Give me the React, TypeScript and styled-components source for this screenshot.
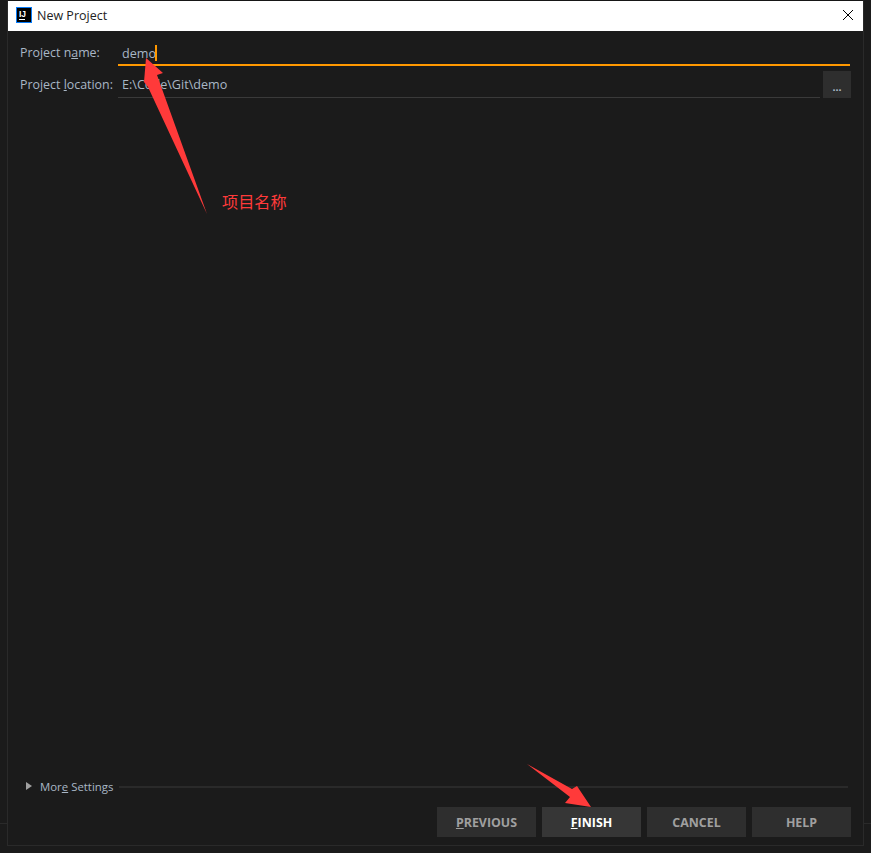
import React from "react";
import styled, { createGlobalStyle } from "styled-components";

const GlobalStyle = createGlobalStyle`
  html, body {
    margin: 0;
    padding: 0;
    background: #1b1b1b;
  }
  * {
    box-sizing: border-box;
  }
`;

const Page = styled.div`
  position: relative;
  width: 871px;
  height: 853px;
  padding: 0 7px 7px 7px;
  overflow: hidden;
  font-family: "Open Sans", "Liberation Sans", sans-serif;
  background: linear-gradient(#2a2a2a, #2a2a2a) 0 823px / 100% 1px no-repeat, #1b1b1b;
`;

const Window = styled.div`
  display: flex;
  flex-direction: column;
  height: 100%;
  background: #1b1b1b;
  border: 1px solid #2a2a2a;
  border-top-color: #161616;
`;

const TitleBar = styled.div`
  display: flex;
  align-items: center;
  flex: none;
  height: 30px;
  padding: 0 9px 2px 8px;
  background: #fff;
`;

const Logo = styled.span`
  display: flex;
  flex-direction: column;
  flex: none;
  width: 16px;
  height: 16px;
  padding: 2px 2px;
  background: #000;
  border: 1px solid #087cfa;
  color: #fff;
  font: bold 8.5px/8px "Liberation Sans", sans-serif;
  &::after {
    content: "";
    width: 6px;
    height: 1px;
    margin-top: 1px;
    background: #fff;
  }
`;

const Title = styled.span`
  flex: 1;
  margin-left: 5px;
  font-size: 12.5px;
  color: #222;
`;

const CloseIcon = styled.svg`
  display: block;
  width: 12px;
  height: 12px;
`;

const Body = styled.div`
  display: flex;
  flex-direction: column;
  flex: 1;
  padding: 8px 12px 8px;
`;

const Row = styled.div`
  display: grid;
  grid-template-columns: 98px 1fr auto;
  align-items: stretch;
  height: 27px;
  margin-bottom: 5px;
`;

const Label = styled.label`
  align-self: center;
  font-size: 12.4px;
  color: #a9b7c6;
  white-space: nowrap;
`;

const Field = styled.div<{ $focused?: boolean }>`
  display: flex;
  align-items: center;
  padding-left: 4px;
  padding-top: ${(p) => (p.$focused ? "3px" : "0")};
  margin-right: ${(p) => (p.$focused ? "1px" : "3px")};
  font-size: 12.6px;
  color: #a9b7c6;
  border-bottom: ${(p) => (p.$focused ? "2px solid #ff9800" : "1px solid #3a3a3a")};
`;

const Caret = styled.span`
  display: inline-block;
  width: 2px;
  height: 16px;
  margin-top: -1px;
  margin-left: -1px;
  background: #ff9800;
`;

const BrowseButton = styled.button`
  width: 28px;
  padding: 4px 0 0;
  background: #2e2e2e;
  border: 0;
  color: #a9b7c6;
  font: bold 11px "Liberation Sans", sans-serif;
`;

const Footer = styled.div`
  margin-top: auto;
`;

const MoreRow = styled.div`
  display: flex;
  align-items: center;
  height: 16px;
  margin: 0 3px 12px 6px;
`;

const Triangle = styled.span`
  width: 0;
  height: 0;
  border-left: 6px solid #a0a0a0;
  border-top: 4px solid transparent;
  border-bottom: 4px solid transparent;
  margin-top: -2px;
`;

const MoreLabel = styled.span`
  margin-left: 8px;
  margin-top: -2px;
  font-size: 11.4px;
  color: #a9b7c6;
  white-space: nowrap;
`;

const MoreLine = styled.span`
  flex: 1;
  height: 2px;
  margin-left: 6px;
  background: #2a2a2a;
`;

const ButtonRow = styled.div`
  display: flex;
  justify-content: flex-end;
  gap: 6px;
`;

const ActionButton = styled.button<{ $primary?: boolean }>`
  width: 99px;
  height: 30px;
  padding: 0;
  border: 0;
  font-family: "Open Sans", "Liberation Sans", sans-serif;
  font-size: 12.4px;
  font-weight: 700;
  background: ${(p) => (p.$primary ? "#363636" : "#2e2e2e")};
  color: ${(p) => (p.$primary ? "#fff" : "#a0a0a0")};
`;

const Overlay = styled.svg`
  position: absolute;
  top: 0;
  left: 0;
  width: 871px;
  height: 853px;
  pointer-events: none;
`;

const Note = styled.span`
  position: absolute;
  left: 222px;
  top: 190px;
  font: 16.2px/22px "Noto Sans CJK SC", sans-serif;
  color: #ff3a3a;
`;

export default function App(): JSX.Element {
  return (
    <>
      <GlobalStyle />
      <Page>
        <Window>
          <TitleBar>
            <Logo>IJ</Logo>
            <Title>New Project</Title>
            <CloseIcon viewBox="0 0 12 12">
              <path d="M1 1 L11 11 M11 1 L1 11" stroke="#000" strokeWidth="1" fill="none" />
            </CloseIcon>
          </TitleBar>
          <Body>
            <Row>
              <Label>
                Project n<u>a</u>me:
              </Label>
              <Field $focused>
                demo
                <Caret />
              </Field>
            </Row>
            <Row>
              <Label>
                Project <u>l</u>ocation:
              </Label>
              <Field>E:\Code\Git\demo</Field>
              <BrowseButton>...</BrowseButton>
            </Row>
            <Footer>
              <MoreRow>
                <Triangle />
                <MoreLabel>
                  Mor<u>e</u> Settings
                </MoreLabel>
                <MoreLine />
              </MoreRow>
              <ButtonRow>
                <ActionButton>
                  <u>P</u>REVIOUS
                </ActionButton>
                <ActionButton $primary>
                  <u>F</u>INISH
                </ActionButton>
                <ActionButton>CANCEL</ActionButton>
                <ActionButton>HELP</ActionButton>
              </ButtonRow>
            </Footer>
          </Body>
        </Window>
        <Overlay viewBox="0 0 871 853">
          <polygon points="146,58 163,73 157,75 207,214 148,87 144,82" fill="#ff3a3a" />
          <polygon points="527,764 572,789 577,786 591,807 565,803 570,797" fill="#ff3a3a" />
        </Overlay>
        <Note>项目名称</Note>
      </Page>
    </>
  );
}
